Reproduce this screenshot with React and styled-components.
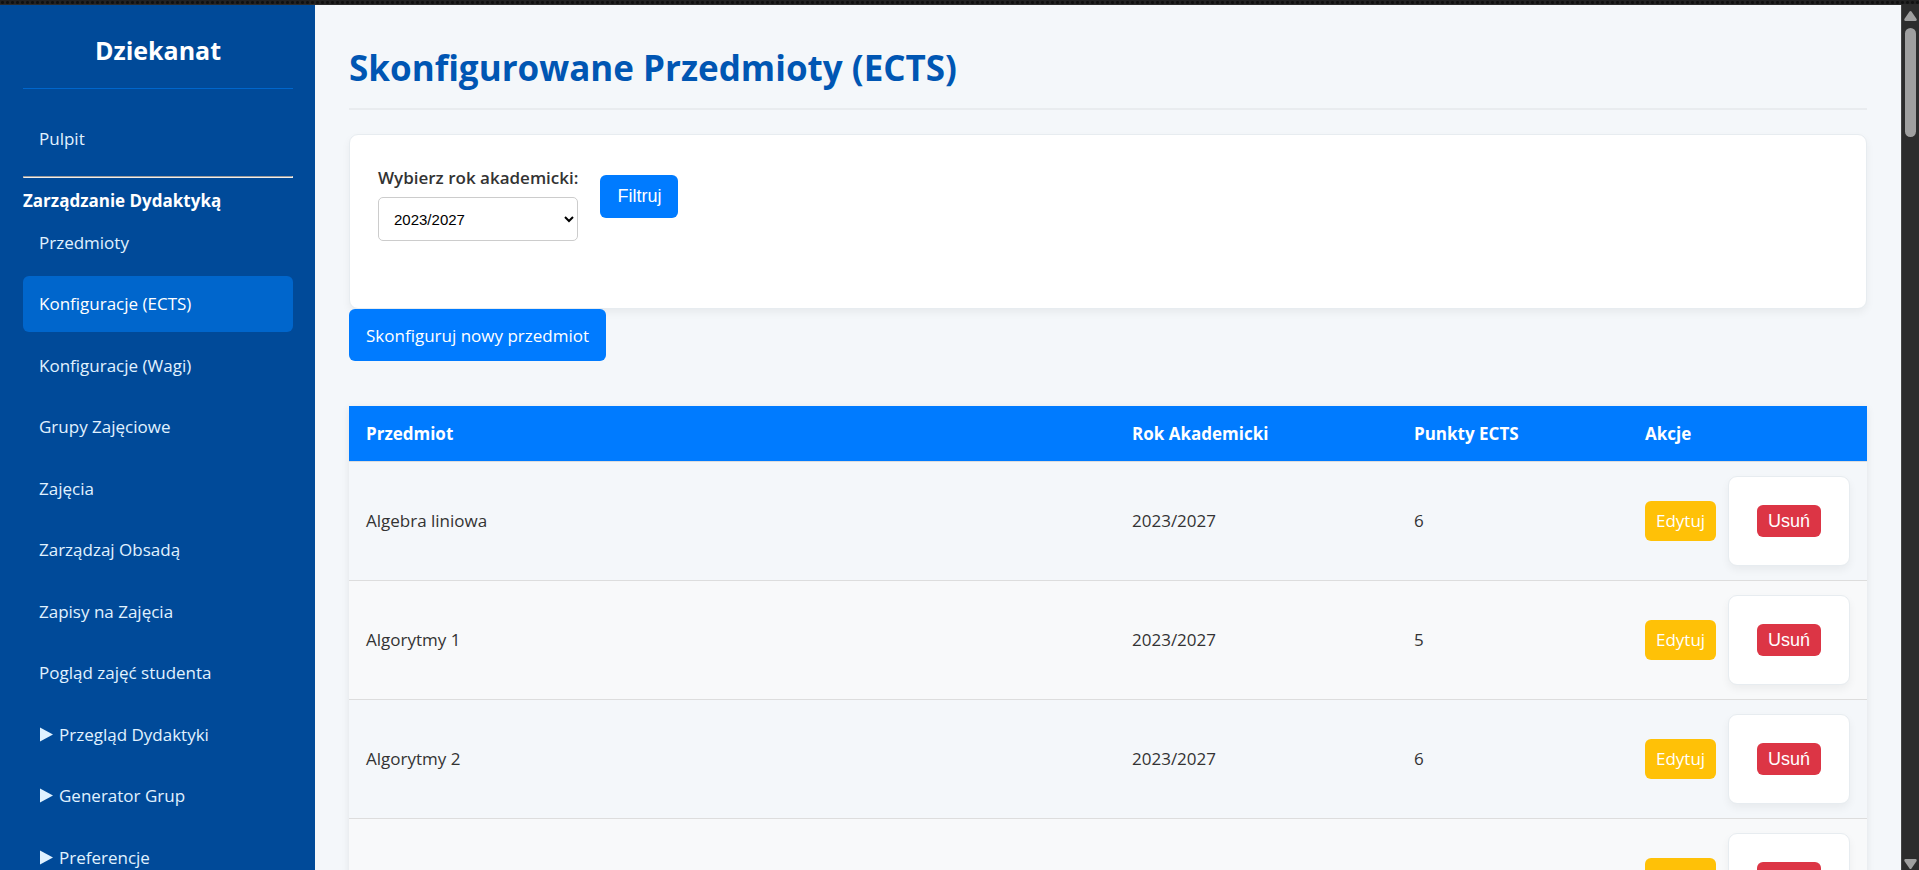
import React from "react";
import styled, { createGlobalStyle } from "styled-components";

const GlobalStyle = createGlobalStyle`
  *, *::before, *::after { box-sizing: border-box; }
  body {
    margin: 0;
    background: #f4f7fa;
    color: #333333;
    font-family: "Open Sans", "Noto Sans", sans-serif;
    font-size: 17px;
    line-height: 28px;
  }
`;

const Window = styled.div`
  display: flex;
  flex-direction: column;
  height: 100vh;
  overflow: hidden;
`;

const TopStrip = styled.div`
  flex: none;
  height: 5px;
  background: radial-gradient(circle, #101010 1px, transparent 2px) 0 0 / 5px 5px, #222222;
  border-bottom: 1px solid #2b2b2b;
`;

const Body = styled.div`
  display: flex;
  flex: 1;
  min-height: 0;
`;

const Sidebar = styled.aside`
  flex: none;
  width: 315px;
  padding: 25px 22px 0 23px;
  overflow: hidden;
  background: #004a99;
  color: #ffffff;
`;

const Brand = styled.h2`
  margin: 0 0 22px;
  padding-bottom: 18px;
  border-bottom: 1px solid #0066cc;
  font-size: 25px;
  line-height: 40px;
  font-weight: 700;
  text-align: center;
`;

const NavList = styled.ul`
  margin: 0;
  padding: 0;
  list-style: none;
`;

const NavItem = styled.li`
  margin-bottom: 5px;

  &:nth-child(even) {
    margin-bottom: 6px;
  }
`;

const NavLink = styled.a`
  display: block;
  padding: 14px 16px;
  border-radius: 6px;
  background: ${(p) => (p.$active ? "#0066cc" : "transparent")};
  color: ${(p) => (p.$active ? "#ffffff" : "#e0f2ff")};
  text-decoration: none;
  white-space: nowrap;
`;

const Triangle = styled.svg`
  width: 14px;
  height: 15px;
  margin-right: 6px;
  vertical-align: -1px;
  fill: currentColor;
`;

const Divider = styled.hr`
  margin: 9px 0;
  border: 1px solid;
  border-color: #9a9a9a #eeeeee #eeeeee #9a9a9a;
`;

const SectionTitle = styled.strong`
  display: block;
  font-weight: 700;
`;

const Main = styled.main`
  flex: 1;
  min-width: 0;
  padding: 34px 34px 0;
  overflow: hidden;
`;

const PageTitle = styled.h1`
  margin: 0 0 24px;
  padding-bottom: 11px;
  border-bottom: 2px solid #e9ecef;
  color: #0056b3;
  font-size: 35px;
  line-height: 58px;
  font-weight: 700;
`;

const Card = styled.form`
  padding: 28px;
  border: 1px solid #e7ecf0;
  border-radius: 9px;
  background: #ffffff;
  box-shadow: 0 4px 8px rgba(0, 0, 0, 0.05);
`;

const FilterCard = styled(Card)`
  display: flex;
  align-items: flex-start;
  gap: 22px;
  padding-bottom: 67px;
`;

const Field = styled.div`
  display: flex;
  flex-direction: column;
  gap: 5px;
  padding-top: 1px;
`;

const Label = styled.label`
  font-weight: 600;
`;

const Select = styled.select`
  width: 200px;
  height: 44px;
  padding: 0 11px;
  border: 1px solid #cccccc;
  border-radius: 5px;
  background: #ffffff;
  color: #000000;
  font-family: "Liberation Sans", Arial, sans-serif;
  font-size: 15px;
`;

const Button = styled.button`
  padding: 0 11px;
  border: 0;
  border-radius: 6px;
  background: #dc3545;
  color: #ffffff;
  font-family: "Liberation Sans", Arial, sans-serif;
  font-size: 18px;
  line-height: 32px;
`;

const FilterButton = styled(Button)`
  margin-top: 12px;
  padding: 0 17px;
  background: #007bff;
  line-height: 43px;
`;

const AddLink = styled.a`
  display: inline-block;
  padding: 13px 17px 11px;
  border-radius: 6px;
  background: #007bff;
  color: #ffffff;
  text-decoration: none;
`;

const Table = styled.table`
  width: 100%;
  margin-top: 45px;
  border-collapse: separate;
  border-spacing: 0;
  table-layout: fixed;
  box-shadow: 0 2px 8px rgba(0, 0, 0, 0.08);
`;

const Col = styled.col`
  width: ${(p) => p.$width};
`;

const HeadCell = styled.th`
  padding: 14px 17px 13px;
  border-bottom: 1px solid #dddddd;
  background: #007bff;
  color: #ffffff;
  font-weight: 700;
  text-align: left;
`;

const Row = styled.tr`
  background: ${(p) => (p.$alt ? "#f8f9fa" : "transparent")};
`;

const Cell = styled.td`
  padding: 14px 17px;
  border-bottom: 1px solid #dddddd;
`;

const Actions = styled.div`
  display: flex;
  align-items: center;
  justify-content: space-between;
`;

const EditLink = styled.a`
  padding: 6px 11px;
  border-radius: 6px;
  background: #ffc107;
  color: #ffffff;
  text-decoration: none;
`;

const Scrollbar = styled.div`
  display: flex;
  flex: none;
  flex-direction: column;
  align-items: center;
  width: 18px;
  padding: 6px 0 1px;
  border-left: 1px solid #444444;
  background: #2c2c2c;
`;

const ScrollArrow = styled.svg`
  flex: none;
  width: 13px;
  height: 10px;
  fill: #9f9f9f;
`;

const ScrollThumb = styled.div`
  flex: none;
  width: 11px;
  height: 109px;
  margin: 7px 0 auto;
  border-radius: 6px;
  background: #9f9f9f;
`;

const links = [
  { label: "Przedmioty" },
  { label: "Konfiguracje (ECTS)", active: true },
  { label: "Konfiguracje (Wagi)" },
  { label: "Grupy Zajęciowe" },
  { label: "Zajęcia" },
  { label: "Zarządzaj Obsadą" },
  { label: "Zapisy na Zajęcia" },
  { label: "Pogląd zajęć studenta" },
  { label: "Przegląd Dydaktyki", group: true },
  { label: "Generator Grup", group: true },
  { label: "Preferencje", group: true },
];

const subjects = [
  { name: "Algebra liniowa", year: "2023/2027", points: 6 },
  { name: "Algorytmy 1", year: "2023/2027", points: 5 },
  { name: "Algorytmy 2", year: "2023/2027", points: 6 },
  { name: "", year: "", points: "" },
];

const stop = (e) => e.preventDefault();

export default function App() {
  return (
    <Window>
      <GlobalStyle />
      <TopStrip />
      <Body>
        <Sidebar>
          <Brand>Dziekanat</Brand>
          <nav>
            <NavList>
              <li>
                <NavLink href="#pulpit">Pulpit</NavLink>
              </li>
            </NavList>
            <Divider />
            <SectionTitle>Zarządzanie Dydaktyką</SectionTitle>
            <NavList>
              {links.map((l) => (
                <NavItem key={l.label}>
                  <NavLink href="#" $active={l.active}>
                    {l.group && (
                      <Triangle viewBox="0 0 14 15" aria-hidden="true">
                        <path d="M1 0.5 L14 7.5 L1 14.5 Z" />
                      </Triangle>
                    )}
                    {l.label}
                  </NavLink>
                </NavItem>
              ))}
            </NavList>
          </nav>
        </Sidebar>
        <Main>
          <PageTitle>Skonfigurowane Przedmioty (ECTS)</PageTitle>
          <FilterCard onSubmit={stop}>
            <Field>
              <Label htmlFor="year">Wybierz rok akademicki:</Label>
              <Select id="year" defaultValue="2023/2027">
                <option>2023/2027</option>
              </Select>
            </Field>
            <FilterButton type="submit">Filtruj</FilterButton>
          </FilterCard>
          <AddLink href="#nowy">Skonfiguruj nowy przedmiot</AddLink>
          <Table>
            <colgroup>
              <Col $width="auto" />
              <Col $width="282px" />
              <Col $width="231px" />
              <Col $width="239px" />
            </colgroup>
            <thead>
              <tr>
                <HeadCell>Przedmiot</HeadCell>
                <HeadCell>Rok Akademicki</HeadCell>
                <HeadCell>Punkty ECTS</HeadCell>
                <HeadCell>Akcje</HeadCell>
              </tr>
            </thead>
            <tbody>
              {subjects.map((s, i) => (
                <Row key={i} $alt={i % 2 === 1}>
                  <Cell>{s.name}</Cell>
                  <Cell>{s.year}</Cell>
                  <Cell>{s.points}</Cell>
                  <Cell>
                    <Actions>
                      <EditLink href="#edytuj">Edytuj</EditLink>
                      <Card onSubmit={stop}>
                        <Button type="submit">Usuń</Button>
                      </Card>
                    </Actions>
                  </Cell>
                </Row>
              ))}
            </tbody>
          </Table>
        </Main>
        <Scrollbar aria-hidden="true">
          <ScrollArrow viewBox="0 0 13 10">
            <path d="M5.5 0.6 Q6.5 -0.4 7.5 0.6 L12.6 8 Q13 10 11.5 10 H1.5 Q0 10 0.4 8 Z" />
          </ScrollArrow>
          <ScrollThumb />
          <ScrollArrow viewBox="0 0 13 10">
            <path d="M5.5 9.4 Q6.5 10.4 7.5 9.4 L12.6 2 Q13 0 11.5 0 H1.5 Q0 0 0.4 2 Z" />
          </ScrollArrow>
        </Scrollbar>
      </Body>
    </Window>
  );
}
